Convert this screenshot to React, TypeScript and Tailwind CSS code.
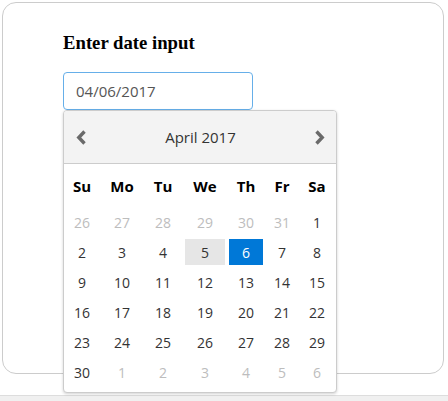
import React from 'react';

const cols = 'grid grid-cols-[34px_38px_36px_40px_34px_30px_32px] gap-x-[4px] pl-[1px]';

type Day = { n: number; muted?: boolean; hover?: boolean; selected?: boolean };

const weeks: Day[][] = [
  [{ n: 26, muted: true }, { n: 27, muted: true }, { n: 28, muted: true }, { n: 29, muted: true }, { n: 30, muted: true }, { n: 31, muted: true }, { n: 1 }],
  [{ n: 2 }, { n: 3 }, { n: 4 }, { n: 5, hover: true }, { n: 6, selected: true }, { n: 7 }, { n: 8 }],
  [{ n: 9 }, { n: 10 }, { n: 11 }, { n: 12 }, { n: 13 }, { n: 14 }, { n: 15 }],
  [{ n: 16 }, { n: 17 }, { n: 18 }, { n: 19 }, { n: 20 }, { n: 21 }, { n: 22 }],
  [{ n: 23 }, { n: 24 }, { n: 25 }, { n: 26 }, { n: 27 }, { n: 28 }, { n: 29 }],
  [{ n: 30 }, { n: 1, muted: true }, { n: 2, muted: true }, { n: 3, muted: true }, { n: 4, muted: true }, { n: 5, muted: true }, { n: 6, muted: true }],
];

function Chevron({ dir }: { dir: 'left' | 'right' }) {
  return (
    <svg width="10" height="15" viewBox="0 0 10 15" className="block">
      <polyline
        points={dir === 'left' ? '8.5,1.5 2.8,7.5 8.5,13.5' : '1.5,1.5 7.2,7.5 1.5,13.5'}
        fill="none"
        stroke="#6a6a6a"
        strokeWidth="3.4"
      />
    </svg>
  );
}

function DatePicker() {
  return (
    <div className="absolute left-0 top-[38px] w-[274px] bg-white border border-[#cccccc] rounded-[4px] shadow-[0_1px_3px_rgba(0,0,0,0.18)] overflow-hidden font-['Open_Sans',sans-serif]">
      {/* header */}
      <div className="h-[53px] bg-[#f3f3f3] border-b border-[#cccccc] flex items-center justify-between pl-[12px] pr-[11px]">
        <Chevron dir="left" />
        <span className="text-[15px] text-[#333333]">April 2017</span>
        <Chevron dir="right" />
      </div>

      <div className="pt-[4px] pb-[7px] flex flex-col gap-y-[4px]">
        <div className={`${cols} h-[37px] items-center`}>
          {['Su', 'Mo', 'Tu', 'We', 'Th', 'Fr', 'Sa'].map((d) => (
            <div key={d} className="text-center text-[15px] font-bold text-black">
              {d}
            </div>
          ))}
        </div>
        {weeks.map((w, i) => (
          <div key={i} className={`${cols} h-[26px]`}>
            {w.map((d, j) => (
              <div
                key={j}
                className={[
                  'flex items-center justify-center text-[14px]',
                  d.selected ? 'bg-[#0078d7] text-white' : d.hover ? 'bg-[#e6e6e6] text-[#333333]' : d.muted ? 'text-[#bdbdbd]' : 'text-[#333333]',
                ].join(' ')}
              >
                {d.n}
              </div>
            ))}
          </div>
        ))}
      </div>
    </div>
  );
}

export default function App() {
  return (
    <div className="w-[448px] h-[401px] bg-white overflow-hidden">
      <div className="ml-[2px] mt-[2px] w-[442px] h-[372px] border border-[#cccccc] rounded-[14px] pl-[60px] pt-[29px]">
        <h3 className="font-['Liberation_Serif',serif] font-bold text-[18.72px] leading-[22px] text-black">
          Enter date input
        </h3>
        <div className="relative mt-[18px] w-[190px]">
          <div className="h-[38px] border border-[#66afe9] rounded-[4px] flex items-center pl-[12px] font-['Open_Sans',sans-serif] text-[15px] text-[#555555]">
            04/06/2017
          </div>
          <DatePicker />
        </div>
      </div>
      <div className="mt-[21px] h-[30px] bg-[#f0f0f0] border-t border-[#dddddd]" />
    </div>
  );
}
